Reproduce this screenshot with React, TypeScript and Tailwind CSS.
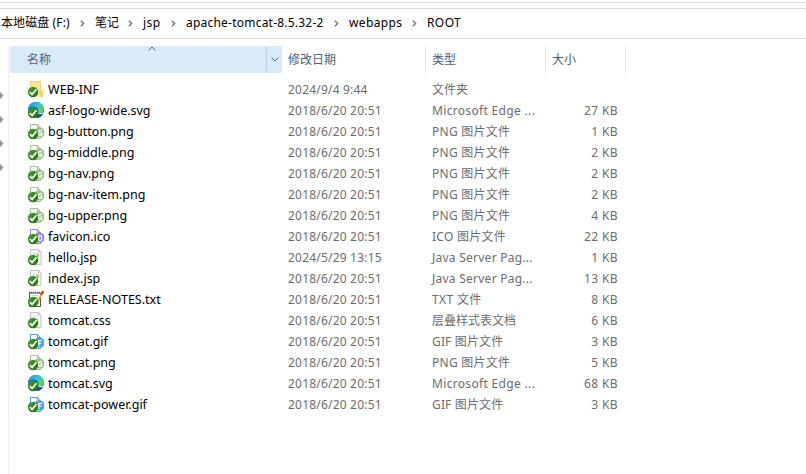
import type { ReactNode } from "react";

type Kind = "folder" | "edge" | "png" | "ico" | "jsp" | "txt" | "css" | "gif";
type Row = { name: string; kind: Kind; date: string; type: string; size: string };

const D = "2018/6/20 20:51";
const PNG = "PNG 图片文件";

const rows: Row[] = [
  { name: "WEB-INF", kind: "folder", date: "2024/9/4 9:44", type: "文件夹", size: "" },
  { name: "asf-logo-wide.svg", kind: "edge", date: D, type: "Microsoft Edge ...", size: "27 KB" },
  { name: "bg-button.png", kind: "png", date: D, type: PNG, size: "1 KB" },
  { name: "bg-middle.png", kind: "png", date: D, type: PNG, size: "2 KB" },
  { name: "bg-nav.png", kind: "png", date: D, type: PNG, size: "2 KB" },
  { name: "bg-nav-item.png", kind: "png", date: D, type: PNG, size: "2 KB" },
  { name: "bg-upper.png", kind: "png", date: D, type: PNG, size: "4 KB" },
  { name: "favicon.ico", kind: "ico", date: D, type: "ICO 图片文件", size: "22 KB" },
  { name: "hello.jsp", kind: "jsp", date: "2024/5/29 13:15", type: "Java Server Pag...", size: "1 KB" },
  { name: "index.jsp", kind: "jsp", date: D, type: "Java Server Pag...", size: "13 KB" },
  { name: "RELEASE-NOTES.txt", kind: "txt", date: D, type: "TXT 文件", size: "8 KB" },
  { name: "tomcat.css", kind: "css", date: D, type: "层叠样式表文档", size: "6 KB" },
  { name: "tomcat.gif", kind: "gif", date: D, type: "GIF 图片文件", size: "3 KB" },
  { name: "tomcat.png", kind: "png", date: D, type: PNG, size: "5 KB" },
  { name: "tomcat.svg", kind: "edge", date: D, type: "Microsoft Edge ...", size: "68 KB" },
  { name: "tomcat-power.gif", kind: "gif", date: D, type: "GIF 图片文件", size: "3 KB" },
];

const typeTracking: Record<Kind, string> = {
  folder: "",
  edge: "tracking-[0.33px]",
  png: "tracking-[0.25px]",
  ico: "tracking-[0.25px]",
  jsp: "tracking-[0.25px]",
  txt: "tracking-[0.35px]",
  css: "",
  gif: "tracking-[0.15px]",
};

function Image({ color, children }: { color: string; children: ReactNode }) {
  return (
    <g stroke={color} fill="none">
      <path d="M2.5 15.500V1.500H9.500L12.500 4.500V15.500Z" fill="#fff" />
      <path d="M9.500 1.500V4.500H12.500" />
      <path d="M8 5.500H14L15.500 7V12.500L14 14H8Z" fill={color} />
      <g stroke="#fff" strokeWidth="1.2">{children}</g>
    </g>
  );
}

function Page() {
  return (
    <g>
      <path d="M2.500 15.500V.500H10.500L13 3V15.500Z" fill="#f8f9f9" stroke="#bfc3c4" />
      <path d="M10.500 .500V3H13" fill="none" stroke="#bfc3c4" />
    </g>
  );
}

function Glyph({ kind }: { kind: Kind }) {
  switch (kind) {
    case "folder":
      return (
        <g>
          <path d="M2 0H13V9H14.500V15.500H2Z" fill="#ffe594" />
          <path d="M2.500 9V.500H12.500V15" fill="none" stroke="#efd37b" />
          <path d="M12 10H14.500V15.500H12Z" fill="#f8d775" stroke="#e9c65c" strokeWidth=".6" />
        </g>
      );
    case "edge":
      return (
        <g>
          <circle cx="8" cy="8" r="8" fill="url(#edgeBase)" />
          <path d="M0 7C1 2 4 0 8 0C13 0 16 3.500 16 7C16 10 13.500 11.500 10.500 11C9 10.700 10.500 9.500 10 7.500C9 4 3 3 0 7Z" fill="url(#edgeTop)" />
          <path d="M9.500 10.500C11.500 12.200 14 11.800 15.400 10.800C14.500 13.500 12 15.800 9 16Z" fill="#134b97" />
          <path d="M9.500 10.500C11 11.700 13.500 11.600 15.600 10L15.200 11.500C13 12.800 10.500 12.400 9.500 10.500Z" fill="#fff" />
        </g>
      );
    case "png":
      return (
        <Image color="#9fc18d">
          <path d="M13.800 7.700H11.500L10.500 8.700V11.200L11.500 12.200H13.700V10H12" />
        </Image>
      );
    case "ico":
      return (
        <Image color="#8f87df">
          <rect x="10.600" y="7.600" width="3" height="4.700" rx="1" />
        </Image>
      );
    case "gif":
      return (
        <Image color="#4ba3e3">
          <path d="M14 7.500H10.700V13M10.700 10H13.500" />
        </Image>
      );
    case "jsp":
      return (
        <g>
          <Page />
          <path d="M8.500 4.500L10.500 6.500L9 8" stroke="#e58950" strokeWidth="1.300" fill="none" />
          <path d="M4.500 4.500H7" stroke="#d6dadd" />
        </g>
      );
    case "css":
      return (
        <g>
          <Page />
          <path d="M5 4.500H9M6 7.500H11M10 10.500H11" stroke="#e2e6e6" />
        </g>
      );
    case "txt":
      return (
        <g>
          <path d="M1.500 2V15.500H12.500V2Z" fill="#fff" stroke="#4e5254" />
          <path d="M1 1.500H12" stroke="#555" strokeWidth="1.500" strokeDasharray="1 1" />
          <path d="M3 4.500H10M3 6.500H10M8 12.500H11" stroke="#c6caca" />
          <path d="M14.500 1.500L9.500 11.500" stroke="#e49b28" strokeWidth="2" />
          <path d="M15.300 0L13.800 3" stroke="#b9362b" strokeWidth="2" />
          <path d="M10 10.500L9 12.500" stroke="#33302b" strokeWidth="1.200" />
        </g>
      );
  }
}

function FileIcon({ kind }: { kind: Kind }) {
  return (
    <svg width="16" height="17" viewBox="0 0 16 17" className="shrink-0 overflow-visible">
      <Glyph kind={kind} />
      <circle cx="5" cy="11" r="5.200" fill="url(#syncBadge)" />
      <path d="M1.900 11.200L4.100 13.400L8.500 8.300" fill="none" stroke="#fff" strokeWidth="1.700" />
    </svg>
  );
}

function Separator() {
  return (
    <svg width="5" height="7" viewBox="0 0 5 7" className="mt-px shrink-0 -translate-y-px">
      <path d="M.8 .8L3.600 3.500L.8 6.200" fill="none" stroke="#777" strokeWidth="1.400" />
    </svg>
  );
}

const crumbs = [
  { label: "本地磁盘 (F:)", box: "w-[79px] tracking-[0.1px]" },
  { label: "笔记", box: "w-[33px]" },
  { label: "jsp", box: "w-[28px] tracking-[0.5px]" },
  { label: "apache-tomcat-8.5.32-2", box: "w-[148px] tracking-[0.22px]" },
  { label: "webapps", box: "w-[63px] tracking-[0.35px]" },
];

export default function App() {
  return (
    <div className="flex h-[474px] w-[806px] flex-col overflow-hidden whitespace-nowrap bg-white pt-[2px] font-['Noto_Sans','Noto_Sans_CJK_SC',sans-serif] text-[12px] leading-[21px] text-black">
      <svg width="0" height="0" className="absolute">
        <defs>
          <linearGradient id="edgeBase" x1="0" y1="0" x2="1" y2="1">
            <stop offset="0" stopColor="#1678cb" />
            <stop offset="1" stopColor="#1552a0" />
          </linearGradient>
          <linearGradient id="edgeTop" x1="0" y1="0" x2="1" y2=".5">
            <stop offset="0" stopColor="#2292d8" />
            <stop offset=".55" stopColor="#35bed2" />
            <stop offset="1" stopColor="#64d45e" />
          </linearGradient>
          <linearGradient id="syncBadge" x1="0" y1="0" x2="1" y2="1">
            <stop offset="0" stopColor="#55a53c" />
            <stop offset=".5" stopColor="#2c8618" />
            <stop offset="1" stopColor="#26760f" />
          </linearGradient>
        </defs>
      </svg>
      <div className="h-[7px] shrink-0 border-y border-[#d9d9d9]" />
      <nav className="flex h-[30px] shrink-0 items-center border-b border-[#d9d9d9] pl-px">
        {crumbs.map((c) => (
          <div key={c.label} className="flex items-center">
            <span className={`${c.box} shrink-0 -translate-y-px`}>{c.label}</span>
            <Separator />
            <span className="w-[10px]" />
          </div>
        ))}
        <span className="-translate-y-px tracking-[0.4px]">ROOT</span>
      </nav>
      <div className="flex flex-1">
        <aside className="flex w-[8px] shrink-0 flex-col gap-[17px] pt-[53px]">
          {[0, 1, 2, 3].map((i) => (
            <svg key={i} width="4" height="7" viewBox="0 0 4 7">
              <path d="M0 0L3.500 3.500L0 7V4.500H-1V2.500H0Z" fill="#8e97a3" />
            </svg>
          ))}
        </aside>
        <main className="mt-[7px] flex-1 border-l border-[#f1f1f1] pl-px">
          <header className="flex h-[27px] leading-[27px] text-[#4c607a]">
            <div className="relative flex w-[272px] bg-[#d9ebf9] pl-[17px]">
              名称
              <svg width="8" height="5" viewBox="0 0 8 5" className="absolute left-[138px] top-0">
                <path d="M.5 4.500L4 1L7.500 4.500" fill="none" stroke="#5b6c7b" />
              </svg>
              <div className="ml-auto flex w-[16px] items-center justify-center border-l border-[#bbd2e3]">
                <svg width="8" height="5" viewBox="0 0 8 5">
                  <path d="M.5 .5L4 4L7.500 .5" fill="none" stroke="#5b6c7b" />
                </svg>
              </div>
            </div>
            <div className="w-[144px] border-r border-[#e5e5e5] pl-[6px]">修改日期</div>
            <div className="w-[120px] border-r border-[#e5e5e5] pl-[6px]">类型</div>
            <div className="w-[80px] border-r border-[#e5e5e5] pl-[6px]">大小</div>
          </header>
          <ul className="pt-[6px] text-[#6d6d6d]">
            {rows.map((r) => (
              <li key={r.name} className="flex h-[21px] items-center">
                <div className="flex w-[278px] items-center gap-[4px] pl-[18px] text-black">
                  <FileIcon kind={r.kind} />
                  <span className="text-[12.5px]">{r.name}</span>
                </div>
                <span className="w-[144px] tracking-[0.2px]">{r.date}</span>
                <span className={`w-[106px] ${typeTracking[r.kind]}`}>{r.type}</span>
                <span className="w-[80px] text-right tracking-[0.4px]">{r.size}</span>
              </li>
            ))}
          </ul>
        </main>
      </div>
    </div>
  );
}
